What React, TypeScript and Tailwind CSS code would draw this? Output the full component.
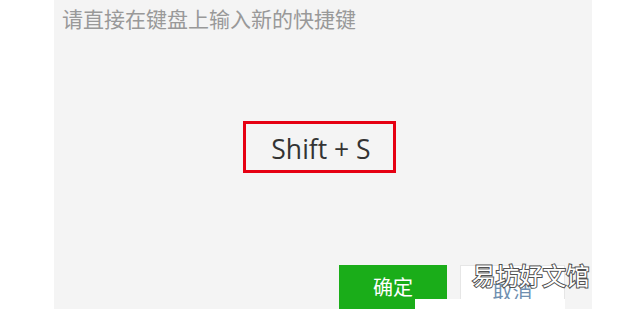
export default function App() {
  return (
    <div className="relative w-[620px] h-[309px] bg-white overflow-hidden font-['Noto_Sans_CJK_SC',sans-serif]">
      <div className="ml-[54px] w-[538px] h-full bg-[#f4f4f4] flex flex-col">
        <div className="pl-[8px] pt-[2px] text-[21px] leading-[32px] text-[#999999] font-['Noto_Sans_CJK_SC',sans-serif]">
          请直接在键盘上输入新的快捷键
        </div>
        <div className="mt-[87px] ml-[189px] w-[153px] h-[55px] border-[3px] border-[#e60012] flex items-center justify-center">
          <span className="text-[26.5px] text-[#333333] font-['Open_Sans',sans-serif] leading-none pt-[4px] pl-[3px]">
            Shift + S
          </span>
        </div>
        <div className="mt-[92px] ml-[285px] flex gap-[13px]">
          <div className="w-[108px] h-[44px] bg-[#1aad19] text-white text-[20px] flex items-start justify-center pt-[8px] leading-[28px]">
            确定
          </div>
          <div className="w-[105px] h-[44px] bg-white border border-[#e6e6e6] text-[#6f8fb0] text-[20px] flex items-start justify-center pt-[12px] leading-[28px]">
            取消
          </div>
        </div>
      </div>
      <div className="absolute left-[415px] top-[299px] w-[150px] h-[10px] bg-white" />
      <div className="absolute left-[472px] top-[259px] text-[23.5px] leading-[32px] text-white font-['Noto_Sans_CJK_SC',sans-serif] [-webkit-text-stroke:2px_#505050] [paint-order:stroke_fill]">
        易坊好文馆
      </div>
    </div>
  );
}
